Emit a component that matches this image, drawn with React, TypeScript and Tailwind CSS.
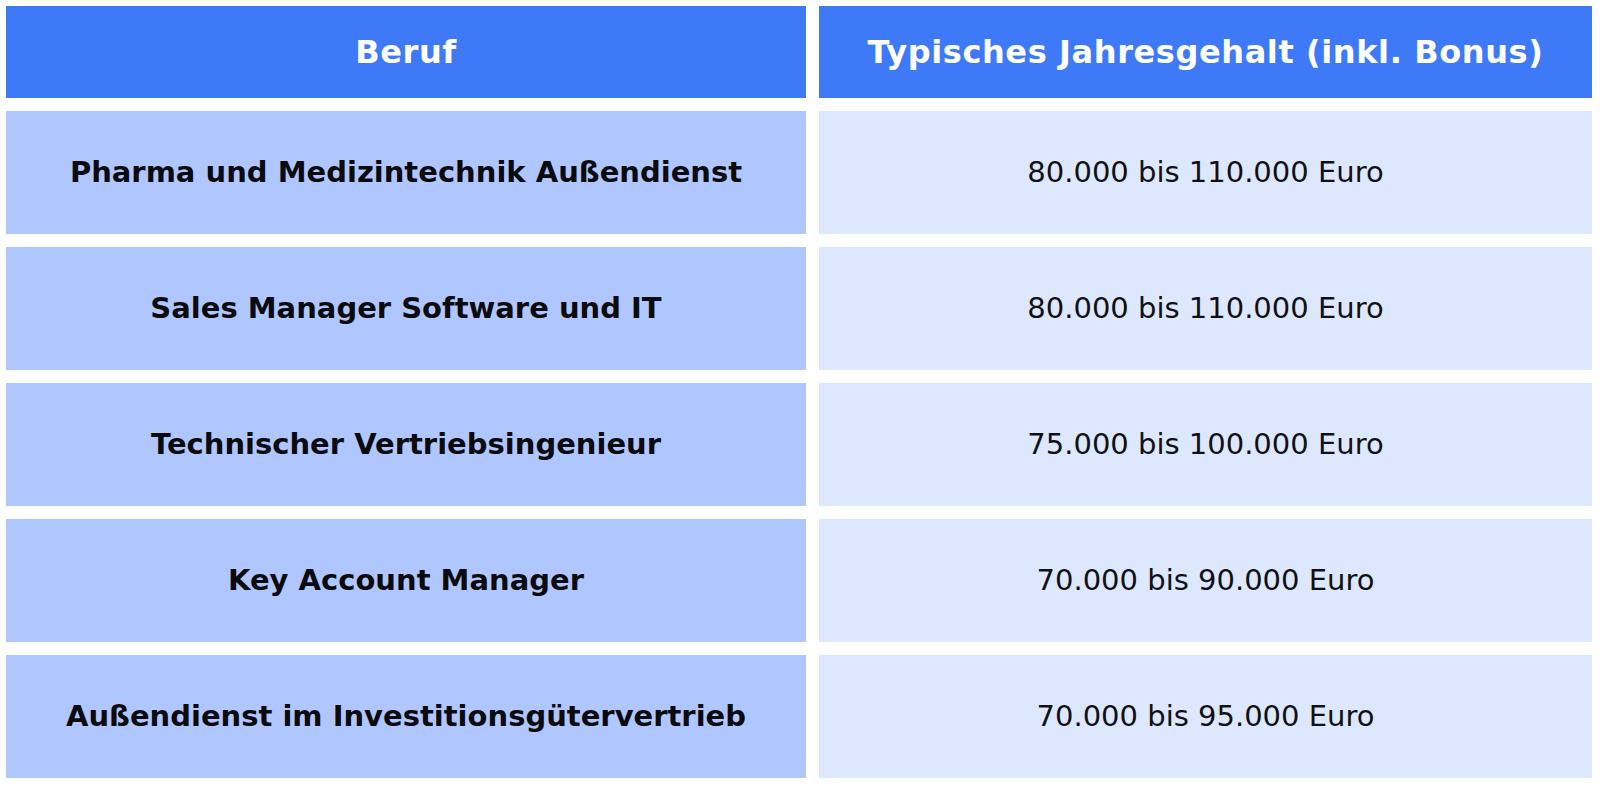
const rows = [
  { beruf: 'Pharma und Medizintechnik Außendienst', gehalt: '80.000 bis 110.000 Euro' },
  { beruf: 'Sales Manager Software und IT', gehalt: '80.000 bis 110.000 Euro' },
  { beruf: 'Technischer Vertriebsingenieur', gehalt: '75.000 bis 100.000 Euro' },
  { beruf: 'Key Account Manager', gehalt: '70.000 bis 90.000 Euro' },
  { beruf: 'Außendienst im Investitionsgütervertrieb', gehalt: '70.000 bis 95.000 Euro' },
];

export default function App() {
  return (
    <div className="w-[1600px] h-[787px] bg-white pt-[6px] pl-[6px] font-['DejaVu_Sans',sans-serif]">
      <div className="grid grid-cols-[800px_773px] gap-[13px]">
        <div className="h-[92px] bg-[#3e79f8] flex items-center justify-center text-white font-bold text-[32px] tracking-[0.6px]">
          Beruf
        </div>
        <div className="h-[92px] bg-[#3e79f8] flex items-center justify-center text-white font-bold text-[32px] tracking-[0.6px]">
          Typisches Jahresgehalt (inkl. Bonus)
        </div>
        {rows.map((row) => (
          <>
            <div
              key={row.beruf}
              className="h-[123px] bg-[#afc7fe] flex items-center justify-center text-[#0b0b0f] font-bold text-[29px]"
            >
              {row.beruf}
            </div>
            <div
              key={row.beruf + '-g'}
              className="h-[123px] bg-[#dde8fe] flex items-center justify-center text-[#111114] text-[29px]"
            >
              {row.gehalt}
            </div>
          </>
        ))}
      </div>
    </div>
  );
}
